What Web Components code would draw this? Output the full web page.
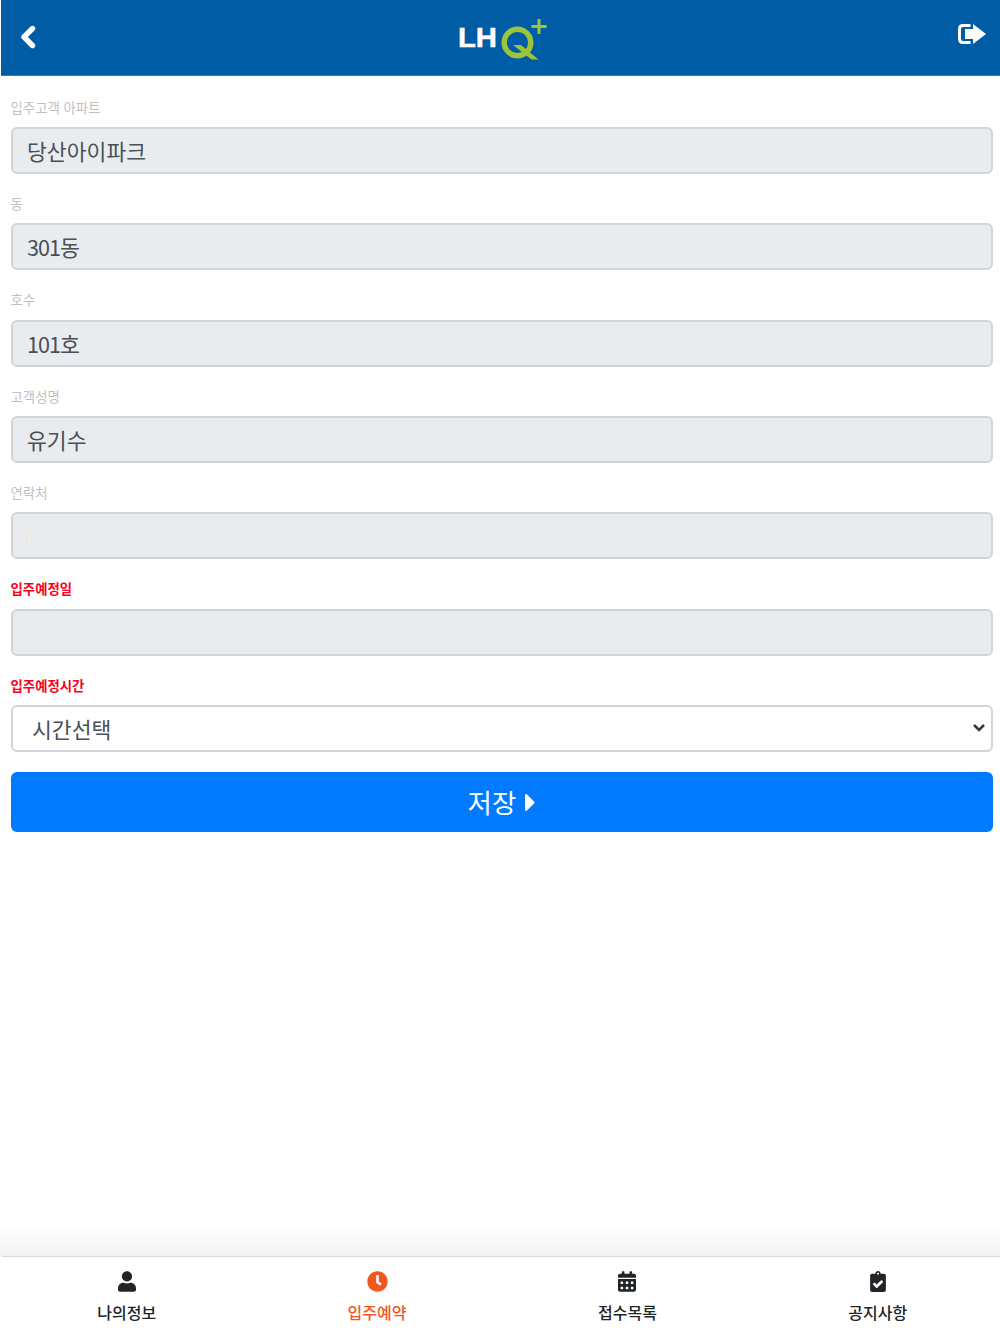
<!DOCTYPE html>
<html lang="ko"><head><meta charset="utf-8"><title>입주예약</title>
<style>
html,body{margin:0;padding:0;background:#fff}
body{font-family:"Noto Sans CJK KR","Noto Sans",sans-serif;color:#212529}
</style></head><body>
<app-shell>
  <app-header slot="header"></app-header>
  <form-field label="입주고객 아파트" value="당산아이파크"></form-field>
  <form-field label="동" value="301동"></form-field>
  <form-field label="호수" value="101호"></form-field>
  <form-field label="고객성명" value="유기수"></form-field>
  <form-field label="연락처" value="" tick></form-field>
  <form-field label="입주예정일" value="" required></form-field>
  <form-field label="입주예정시간" value="시간선택" required select></form-field>
  <save-button>저장</save-button>
  <tab-bar slot="footer">
    <tab-item icon="user">나의정보</tab-item>
    <tab-item icon="clock" active>입주예약</tab-item>
    <tab-item icon="calendar">접수목록</tab-item>
    <tab-item icon="clipboard">공지사항</tab-item>
  </tab-bar>
</app-shell>
<script>
const ICONS={
user:['0 0 448 512','M224 256c70.7 0 128-57.3 128-128S294.7 0 224 0 96 57.3 96 128s57.3 128 128 128zm89.6 32h-16.7c-22.2 10.2-46.9 16-72.9 16s-50.6-5.8-72.9-16h-16.7C60.2 288 0 348.2 0 422.4V464c0 26.5 21.5 48 48 48h352c26.5 0 48-21.5 48-48v-41.6c0-74.2-60.2-134.4-134.4-134.4z'],
clock:['0 0 512 512','M256,8C119,8,8,119,8,256S119,504,256,504,504,393,504,256,393,8,256,8Zm92.49,313h0l-20,25a16,16,0,0,1-22.49,2.5h0l-67-49.72a40,40,0,0,1-15-31.23V112a16,16,0,0,1,16-16h32a16,16,0,0,1,16,16V256l58,42.5A16,16,0,0,1,348.49,321Z'],
calendar:['0 0 448 512','M0 464c0 26.5 21.5 48 48 48h352c26.5 0 48-21.5 48-48V192H0v272zm320-196c0-6.6 5.4-12 12-12h40c6.6 0 12 5.4 12 12v40c0 6.6-5.4 12-12 12h-40c-6.6 0-12-5.4-12-12v-40zm0 128c0-6.6 5.4-12 12-12h40c6.6 0 12 5.4 12 12v40c0 6.6-5.4 12-12 12h-40c-6.6 0-12-5.4-12-12v-40zM192 268c0-6.6 5.4-12 12-12h40c6.6 0 12 5.4 12 12v40c0 6.6-5.4 12-12 12h-40c-6.6 0-12-5.4-12-12v-40zm0 128c0-6.6 5.4-12 12-12h40c6.6 0 12 5.4 12 12v40c0 6.6-5.4 12-12 12h-40c-6.6 0-12-5.4-12-12v-40zM64 268c0-6.6 5.4-12 12-12h40c6.6 0 12 5.4 12 12v40c0 6.6-5.4 12-12 12H76c-6.6 0-12-5.4-12-12v-40zm0 128c0-6.6 5.4-12 12-12h40c6.6 0 12 5.4 12 12v40c0 6.6-5.4 12-12 12H76c-6.6 0-12-5.4-12-12v-40zM400 64h-48V16c0-8.8-7.2-16-16-16h-32c-8.8 0-16 7.2-16 16v48H160V16c0-8.8-7.2-16-16-16h-32c-8.8 0-16 7.2-16 16v48H48C21.5 64 0 85.5 0 112v48h448v-48c0-26.5-21.5-48-48-48z'],
clipboard:['0 0 384 512','M336 64h-80c0-35.3-28.7-64-64-64s-64 28.7-64 64H48C21.5 64 0 85.5 0 112v352c0 26.5 21.5 48 48 48h288c26.5 0 48-21.5 48-48V112c0-26.5-21.5-48-48-48zM192 40c13.3 0 24 10.7 24 24s-10.7 24-24 24-24-10.7-24-24 10.7-24 24-24zm121.2 231.8l-143 141.8c-4.7 4.7-12.3 4.6-17-.1l-82.6-83.3c-4.7-4.7-4.6-12.3.1-17L99.1 285c4.7-4.7 12.3-4.6 17 .1l46 46.4 106-105.2c4.7-4.7 12.3-4.6 17 .1l28.2 28.4c4.7 4.8 4.6 12.3-.1 17z'],
caret:['0 0 192 512','M0 384.662V127.338c0-17.818 21.543-26.741 34.142-14.142l128.662 128.662c7.81 7.81 7.81 20.474 0 28.284L34.142 398.804C21.543 411.404 0 402.48 0 384.662z']
};
const svg=(n,w,h)=>`<svg viewBox="${ICONS[n][0]}" width="${w}" height="${h}" fill="currentColor" aria-hidden="true"><path d="${ICONS[n][1]}"/></svg>`;
function def(name,html){
  customElements.define(name,class extends HTMLElement{
    connectedCallback(){
      if(this.shadowRoot)return;
      const r=this.attachShadow({mode:'open'});
      r.innerHTML=typeof html==='function'?html(this):html;
    }
  });
}
def('app-shell',`<style>
:host{display:flex;flex-direction:column;height:1334px;width:1000px;overflow:hidden}
main{flex:1;display:flex;flex-direction:column;padding:21.7px 7px 0 10.5px;min-height:0}
</style><slot name="header"></slot><main><slot></slot></main><slot name="footer"></slot>`);
def('app-header',`<style>
:host{display:flex;flex:none;align-items:flex-start;justify-content:space-between;height:75px;background:#005ca4;border-bottom:1px solid #2f7cc0;margin-left:1px;color:#fff;position:relative}
.back{margin:25px 0 0 18px;display:flex}
.out{margin:24px 14px 0 0;display:flex}
.logo{position:absolute;left:454px;top:16px;display:block}
text{font-family:"Liberation Sans",sans-serif;font-weight:700;font-size:27px;fill:#fff;stroke:#fff;stroke-width:.5px}
</style>
<span class="back"><svg width="18" height="24" viewBox="0 0 18 24" fill="none" aria-hidden="true"><path d="M13.500 3.500L5 12l8.500 8.500" stroke="#fff" stroke-width="5.400" stroke-linejoin="round" stroke-linecap="round"/></svg></span>
<svg class="logo" width="94" height="46" viewBox="0 0 94 46" role="img" aria-label="LHQ+">
  <text x="3" y="30.500" textLength="39" lengthAdjust="spacingAndGlyphs">LH</text>
  <circle cx="62.500" cy="26.500" r="13.300" fill="none" stroke="#9dc43a" stroke-width="5.400"/>
  <path d="M58 29h8l17.500 14.500h-7z" fill="#9dc43a"/>
  <path d="M84 3v15M76.500 10.500h15" stroke="#9dc43a" stroke-width="3" fill="none"/>
</svg>
<span class="out"><svg width="28" height="20" viewBox="0 0 28 20" aria-hidden="true" fill="none">
  <path d="M12.500 1.500H5Q1.500 1.500 1.500 5V15Q1.500 18.500 5 18.500H12.500" stroke="#fff" stroke-width="3"/>
  <path d="M7 5h8V0L28 10 15 20v-5H7z" fill="#fff"/>
</svg></span>`);
def('form-field',h=>{
  const req=h.hasAttribute('required'),sel=h.hasAttribute('select'),tick=h.hasAttribute('tick');
  const val=(h.getAttribute('value')||'').replace(/\d+/g,m=>`<span class="d">${m}</span>`);
  return `<style>
:host{display:block;flex:none;height:96.33px}
label{display:block;height:29.33px;line-height:19px;font-size:13.400px;color:${req?'#f80020':'#bfbfbf'};font-weight:${req?700:400};box-sizing:border-box}
.box{height:47px;box-sizing:border-box;border:2px solid #d0d5db;border-radius:6px;background:${sel?'#fff':'#e9ecef'};color:#495057;font-size:21.600px;line-height:43px;padding:0 ${sel?'19.5px':'14.5px'};display:flex;align-items:center;justify-content:space-between;white-space:nowrap}
.d{letter-spacing:-1px}
.tick{display:block;width:1px;height:10px;background:#f3e3bd;margin-top:2px}
svg{margin-right:-14.500px;color:#343a40;flex:none}
</style><label>${h.getAttribute('label')}</label><div class="box"><span>${val}</span>${sel?`<svg width="14" height="10" viewBox="0 0 14 10" fill="none" aria-hidden="true"><path d="M2 2l5 5 5-5" stroke="currentColor" stroke-width="2.600"/></svg>`:''}${tick?'<i class="tick" style="margin-right:auto;margin-left:-1px"></i>':''}</div>`;
});
def('save-button',`<style>
:host{display:flex;flex:none;height:60px;background:#007bff;border-radius:6px;color:#fff;align-items:center;justify-content:center;gap:8.500px;font-size:26.500px;line-height:60px}
svg{margin-top:2px}
</style><slot></slot>${svg('caret',11,29)}`);
def('tab-bar',`<style>
:host{display:grid;grid-template-columns:repeat(4,1fr);flex:none;height:77px;border-top:1px solid #d9d9d9;background:#fff;position:relative;margin:0 -3px 0 1.5px}
:host::before{content:"";position:absolute;left:-1.500px;right:0;bottom:calc(100% + 1px);height:34px;background:linear-gradient(to bottom,rgba(243,243,243,0),#f3f3f3);pointer-events:none}
</style><slot></slot>`);
def('tab-item',h=>{
  const active=h.hasAttribute('active');
  const n=h.getAttribute('icon');
  const sizes={user:[18,21],clock:[21,21],calendar:[18,21],clipboard:[16,21]}[n];
  return `<style>
:host{display:flex;flex-direction:column;align-items:center;color:${active?'#f1561f':'#212529'}}
.i{height:21px;margin-top:14px;display:flex}
.t{margin-top:7.500px;font-size:16px;line-height:24px;font-weight:500;white-space:nowrap}
</style><span class="i">${svg(n,sizes[0],sizes[1])}</span><span class="t"><slot></slot></span>`;
});
</script>
</body></html>
